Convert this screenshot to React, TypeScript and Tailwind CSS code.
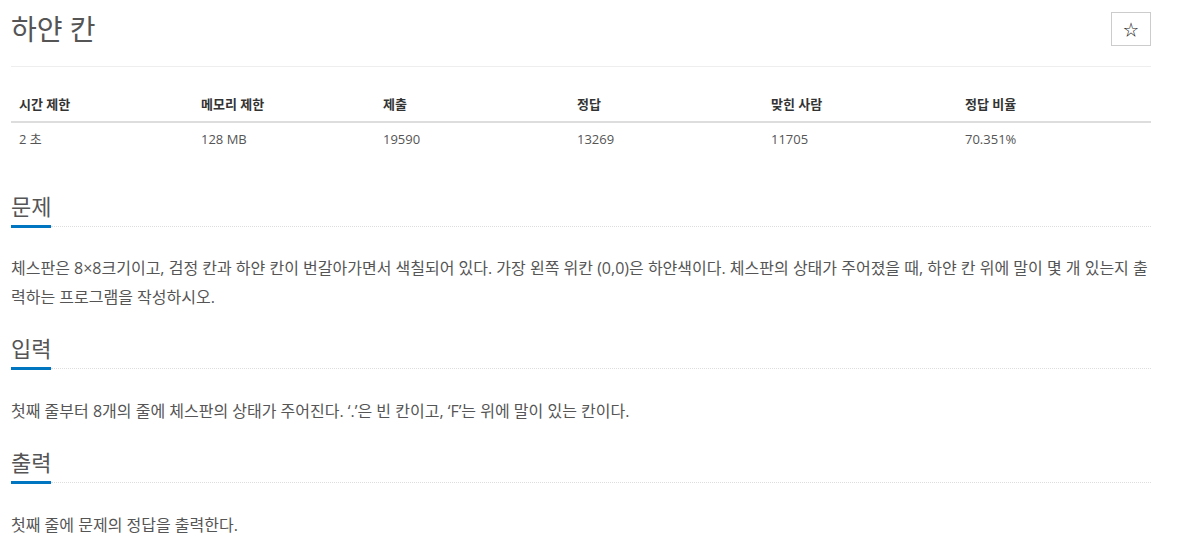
const stats = [
  { label: '시간 제한', value: '2 초', w: 'w-[182px]' },
  { label: '메모리 제한', value: '128 MB', w: 'w-[182px]' },
  { label: '제출', value: '19590', w: 'w-[194px]' },
  { label: '정답', value: '13269', w: 'w-[194px]' },
  { label: '맞힌 사람', value: '11705', w: 'w-[194px]' },
  { label: '정답 비율', value: '70.351%', w: 'w-[194px]' },
];

function Headline({ title, className }: { title: string; className?: string }) {
  return (
    <div className={`flex items-end ${className ?? ''}`}>
      <h2 className="border-b-[3px] border-[#0076c0] pb-[5px] text-[22px] leading-[28px] font-normal text-[#555]">
        {title}
      </h2>
      <div className="mb-[1px] flex-1 border-b border-dotted border-[#ddd]" />
    </div>
  );
}

export default function App() {
  return (
    <div
      className="min-h-screen bg-white"
      style={{ fontFamily: '"Open Sans", "Noto Sans CJK KR", sans-serif' }}
    >
      <div className="ml-[11px] w-[1140px]">
        <div className="mt-[12px] flex items-start justify-between">
          <h1 className="text-[28px] leading-[34px] font-normal text-[#555]">하얀 칸</h1>
          <button className="flex h-[34px] w-[40px] items-center justify-center border border-[#ccc] bg-white text-[15px] text-[#222]">
            ☆
          </button>
        </div>
        <div className="mt-[20px] border-t border-[#eee]" />

        <table className="mt-[21px] w-full border-collapse text-[13px] text-[#333]">
          <thead>
            <tr className="border-b-2 border-[#ddd]">
              {stats.map((s) => (
                <th key={s.label} className={`${s.w} px-2 py-2 text-left leading-[17px] font-bold`}>
                  {s.label}
                </th>
              ))}
            </tr>
          </thead>
          <tbody>
            <tr>
              {stats.map((s) => (
                <td key={s.label} className="px-2 py-2 leading-[17px] text-[#555]">
                  {s.value}
                </td>
              ))}
            </tr>
          </tbody>
        </table>

        <Headline title="문제" className="mt-[36px]" />
        <p className="mt-[26px] text-[16px] leading-[29px] text-[#555]">
          체스판은 8×8크기이고, 검정 칸과 하얀 칸이 번갈아가면서 색칠되어 있다. 가장 왼쪽 위칸 (0,0)은 하얀색이다. 체스판의 상태가 주어졌을 때, 하얀 칸 위에 말이 몇 개 있는지 출력하는 프로그램을 작성하시오.
        </p>

        <Headline title="입력" className="mt-[22px]" />
        <p className="mt-[27px] text-[16px] leading-[29px] text-[#555]">
          첫째 줄부터 8개의 줄에 체스판의 상태가 주어진다. ‘.’은 빈 칸이고, ‘F’는 위에 말이 있는 칸이다.
        </p>

        <Headline title="출력" className="mt-[22px]" />
        <p className="mt-[27px] text-[16px] leading-[29px] text-[#555]">
          첫째 줄에 문제의 정답을 출력한다.
        </p>
      </div>
    </div>
  );
}
